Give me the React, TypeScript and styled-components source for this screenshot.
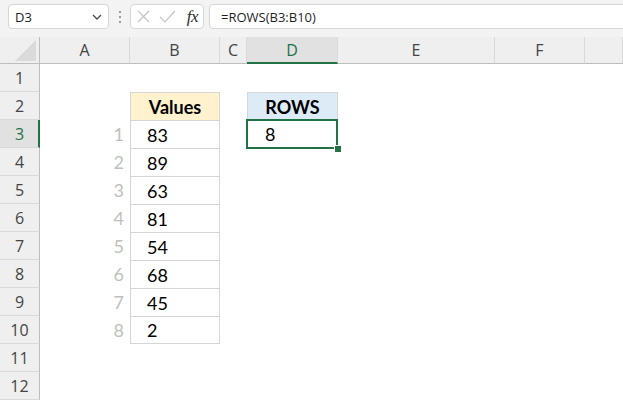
import React from 'react';
import { styled, createGlobalStyle } from 'styled-components';

const GlobalStyle = createGlobalStyle`
  html, body {
    margin: 0;
    padding: 0;
    background: #ffffff;
    overflow: hidden;
  }
`;

const Window = styled.div`
  width: 623px;
  height: 404px;
  display: flex;
  flex-direction: column;
  background: #ffffff;
  overflow: hidden;
`;

const FormulaBar = styled.div`
  height: 37px;
  flex: 0 0 37px;
  display: flex;
  align-items: flex-start;
  padding: 4px 0 0 8px;
  box-sizing: border-box;
  background: #f3f3f3;
  font-family: 'Open Sans', 'Liberation Sans', sans-serif;
  font-size: 13px;
  color: #1f1f1f;
`;

const Box = styled.div<{ $width?: number }>`
  height: 25px;
  box-sizing: border-box;
  background: #ffffff;
  border: 1px solid #d6d6d6;
  border-radius: 4px;
  display: flex;
  align-items: center;
  ${({ $width }) => ($width ? `width: ${$width}px; flex: 0 0 ${$width}px;` : 'flex: 1 1 auto; margin-right: -6px;')}
`;

const NameText = styled.span`
  flex: 1;
  padding-left: 6px;
`;

const Chevron = styled.svg`
  width: 12px;
  height: 12px;
  margin-right: 5px;
`;

const Dots = styled.div`
  width: 21px;
  flex: 0 0 21px;
  height: 25px;
  display: flex;
  flex-direction: column;
  align-items: center;
  justify-content: center;
  gap: 3px;
  & span {
    width: 2px;
    height: 2px;
    background: #9a9a9a;
  }
`;

const IconRow = styled.div`
  flex: 1;
  display: flex;
  align-items: center;
  padding-left: 6px;
  gap: 9px;
`;

const Fx = styled.span`
  margin-left: auto;
  margin-right: 5px;
  font-family: 'Liberation Serif', serif;
  font-style: italic;
  font-size: 17px;
  color: #2b2b2b;
  letter-spacing: -0.5px;
`;

const FormulaText = styled.span`
  padding-left: 11px;
`;

const Gap = styled.div`
  width: 5px;
  flex: 0 0 5px;
`;

const Sheet = styled.div`
  flex: 1;
  display: grid;
  grid-template-columns: 40px 90px 90px 27px 91px 157px 90px 1fr;
  grid-template-rows: 27px repeat(12, 28px) 1fr;
  font-family: 'Lato', 'Open Sans', sans-serif;
  font-size: 18px;
  color: #000;
`;

const Corner = styled.div`
  background: #efefef;
  border-right: 1px solid #bdbdbd;
  border-bottom: 1px solid #bdbdbd;
  box-sizing: border-box;
  display: flex;
  align-items: flex-end;
  justify-content: flex-end;
  padding: 0 3px 2px 0;
`;

const ColHead = styled.div<{ $sel?: boolean }>`
  box-sizing: border-box;
  display: flex;
  align-items: center;
  justify-content: center;
  background: ${({ $sel }) => ($sel ? '#e1e1e1' : '#efefef')};
  border-right: 1px solid #d9d9d9;
  border-bottom: ${({ $sel }) => ($sel ? '2px solid #217346' : '1px solid #bdbdbd')};
  color: ${({ $sel }) => ($sel ? '#217346' : '#444444')};
  font-family: 'Open Sans', 'Liberation Sans', sans-serif;
  font-size: 16px;
  padding-top: ${({ $sel }) => ($sel ? '1px' : '0')};
`;

const RowHead = styled.div<{ $sel?: boolean }>`
  box-sizing: border-box;
  display: flex;
  align-items: center;
  justify-content: center;
  background: ${({ $sel }) => ($sel ? '#e1e1e1' : '#efefef')};
  border-right: ${({ $sel }) => ($sel ? '2px solid #217346' : '1px solid #bdbdbd')};
  border-bottom: 1px solid #d9d9d9;
  color: ${({ $sel }) => ($sel ? '#217346' : '#444444')};
  font-family: 'Open Sans', 'Liberation Sans', sans-serif;
  font-size: 16px;
  padding-left: ${({ $sel }) => ($sel ? '1px' : '0')};
`;

const Blank = styled.div``;

const IndexCell = styled.div`
  display: flex;
  align-items: center;
  justify-content: flex-end;
  padding-right: 6px;
  color: #bfbfbf;
`;

const TableCell = styled.div<{ $fill?: string; $bold?: boolean; $last?: boolean }>`
  position: relative;
  box-sizing: border-box;
  display: flex;
  align-items: center;
  justify-content: ${({ $bold }) => ($bold ? 'center' : 'flex-start')};
  padding-left: ${({ $bold }) => ($bold ? '0' : '16px')};
  background: ${({ $fill }) => $fill || '#ffffff'};
  font-weight: ${({ $bold }) => ($bold ? 700 : 400)};
  border-top: 1px solid #d6d6d6;
  border-left: 1px solid #d6d6d6;
  border-right: 1px solid #d6d6d6;
  border-bottom: ${({ $last }) => ($last ? '1px solid #d6d6d6' : '0')};
`;

const ActiveCell = styled.div`
  position: relative;
  display: flex;
  align-items: center;
  padding-left: 18px;
  &::after {
    content: '';
    position: absolute;
    left: -1px;
    top: -1px;
    right: 0;
    bottom: -1px;
    border: 2px solid #217346;
    pointer-events: none;
  }
`;

const Handle = styled.span`
  position: absolute;
  right: -3px;
  bottom: -4px;
  width: 6px;
  height: 6px;
  background: #217346;
  border-left: 1px solid #fff;
  border-top: 1px solid #fff;
  z-index: 2;
`;

const values = [83, 89, 63, 81, 54, 68, 45, 2];
const columns = ['A', 'B', 'C', 'D', 'E', 'F', ''];

const App: React.FC = () => {
  const rows: React.ReactNode[] = [];

  for (let r = 1; r <= 12; r++) {
    const cells: React.ReactNode[] = [];
    cells.push(
      <RowHead key={`h${r}`} $sel={r === 3}>
        {r}
      </RowHead>
    );
    const idx = r - 3;
    const inTable = idx >= 0 && idx < values.length;

    // A
    cells.push(inTable ? <IndexCell key={`a${r}`}>{idx + 1}</IndexCell> : <Blank key={`a${r}`} />);

    // B
    if (r === 2) {
      cells.push(
        <TableCell key={`b${r}`} $fill="#fff2cc" $bold>
          Values
        </TableCell>
      );
    } else if (inTable) {
      cells.push(
        <TableCell key={`b${r}`} $last={idx === values.length - 1}>
          {values[idx]}
        </TableCell>
      );
    } else {
      cells.push(<Blank key={`b${r}`} />);
    }

    // C
    cells.push(<Blank key={`c${r}`} />);

    // D
    if (r === 2) {
      cells.push(
        <TableCell key={`d${r}`} $fill="#ddebf7" $bold>
          ROWS
        </TableCell>
      );
    } else if (r === 3) {
      cells.push(
        <ActiveCell key={`d${r}`}>
          8
          <Handle />
        </ActiveCell>
      );
    } else {
      cells.push(<Blank key={`d${r}`} />);
    }

    cells.push(<Blank key={`e${r}`} />);
    cells.push(<Blank key={`f${r}`} />);
    cells.push(<Blank key={`g${r}`} />);
    rows.push(...cells);
  }

  return (
    <Window>
      <GlobalStyle />
      <FormulaBar>
        <Box $width={101}>
          <NameText>D3</NameText>
          <Chevron viewBox="0 0 12 12">
            <path d="M2 4 L6 8 L10 4" fill="none" stroke="#4a4a4a" strokeWidth="1.3" />
          </Chevron>
        </Box>
        <Dots>
          <span />
          <span />
          <span />
        </Dots>
        <Box $width={74}>
          <IconRow>
            <svg width="13" height="13" viewBox="0 0 13 13">
              <path d="M1 1 L12 12 M12 1 L1 12" stroke="#c4c4c4" strokeWidth="1.2" fill="none" />
            </svg>
            <svg width="17" height="13" viewBox="0 0 17 13">
              <path d="M1 7 L6 12 L16 1" stroke="#c4c4c4" strokeWidth="1.2" fill="none" />
            </svg>
            <Fx>fx</Fx>
          </IconRow>
        </Box>
        <Gap />
        <Box>
          <FormulaText>=ROWS(B3:B10)</FormulaText>
        </Box>
      </FormulaBar>
      <Sheet>
        <Corner>
          <svg width="21" height="21" viewBox="0 0 21 21">
            <polygon points="21,0 21,21 0,21" fill="#dadada" />
          </svg>
        </Corner>
        {columns.map((c, i) => (
          <ColHead key={`col${i}`} $sel={c === 'D'}>
            {c}
          </ColHead>
        ))}
        {rows}
      </Sheet>
    </Window>
  );
};

export default App;
